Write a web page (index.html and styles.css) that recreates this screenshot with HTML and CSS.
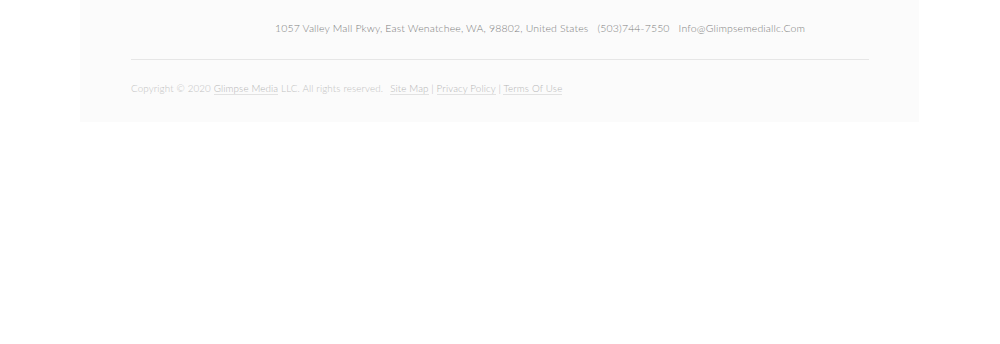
FILE: index.html
```html
<!DOCTYPE html>
<html>
<head>
<meta charset="utf-8">
<link rel="stylesheet" href="styles.css">
</head>
<body>
<footer class="footer">
  <div class="contact">
    <span class="addr">1057 Valley Mall Pkwy, East Wenatchee, WA, 98802, United States</span>
    <span class="phone">(503)744-7550</span>
    <span class="email">Info@Glimpsemediallc.Com</span>
  </div>
  <hr class="rule">
  <div class="legal">
    <span class="copy">Copyright © 2020 <a href="#" class="lnk">Glimpse Media</a> LLC. All rights reserved.</span>
    <span class="links"><a href="#" class="lnk">Site Map</a> | <a href="#" class="lnk">Privacy Policy</a> | <a href="#" class="lnk">Terms Of Use</a></span>
  </div>
</footer>
</body>
</html>
```
FILE: styles.css
```css
html, body {
  margin: 0;
  padding: 0;
  background: #ffffff;
}
body {
  font-family: "Lato", "Noto Sans", sans-serif;
  font-weight: 300;
}
.footer {
  width: 839px;
  margin-left: 80px;
  height: 122px;
  background: #fbfbfb;
  box-sizing: border-box;
  padding: 0 50px 0 51px;
  display: flex;
  flex-direction: column;
}
.contact {
  display: flex;
  gap: 9px;
  padding-left: 144px;
  padding-top: 21px;
  height: 59px;
  box-sizing: border-box;
  font-size: 10.5px;
  line-height: 14px;
  letter-spacing: 0.15px;
  color: #7e7e7e;
  white-space: nowrap;
}
.rule {
  margin: 0;
  border: 0;
  height: 1px;
  background: #e6e6e6;
}
.legal {
  padding-top: 21px;
  font-size: 9.8px;
  line-height: 14px;
  letter-spacing: 0.13px;
  color: #c2c2c2;
  white-space: nowrap;
  display: flex;
  gap: 7px;
}
.lnk {
  color: #b5b5b5;
  font-weight: 300;
  text-decoration: none;
  border-bottom: 1px solid #e2e2e2;
}
.links {
  color: #b5b5b5;
}
```
